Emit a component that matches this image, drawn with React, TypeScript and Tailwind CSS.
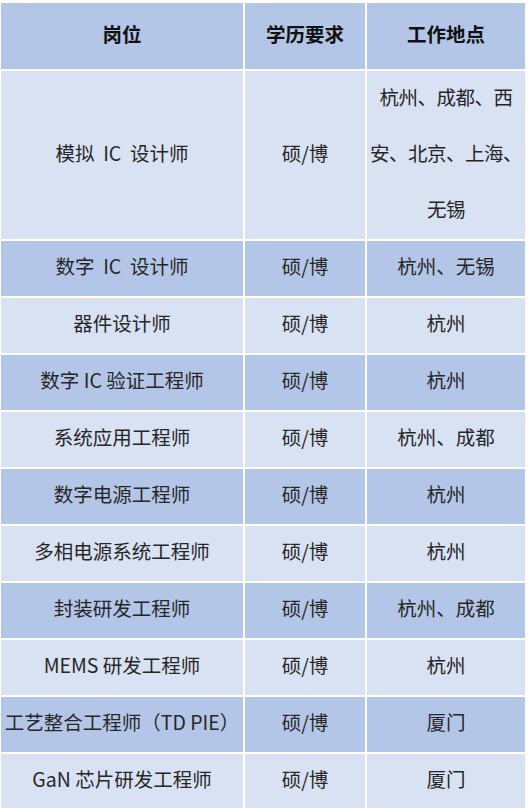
const rows: [string, string, string][] = [
  ["数字\u00a0\u00a0IC\u00a0\u00a0设计师", "硕/博", "杭州、无锡"],
  ["器件设计师", "硕/博", "杭州"],
  ["数字 IC 验证工程师", "硕/博", "杭州"],
  ["系统应用工程师", "硕/博", "杭州、成都"],
  ["数字电源工程师", "硕/博", "杭州"],
  ["多相电源系统工程师", "硕/博", "杭州"],
  ["封装研发工程师", "硕/博", "杭州、成都"],
  ["MEMS 研发工程师", "硕/博", "杭州"],
  ["工艺整合工程师（TD PIE）", "硕/博", "厦门"],
  ["GaN 芯片研发工程师", "硕/博", "厦门"],
];

const cell = "flex items-center justify-center text-center whitespace-nowrap";

export default function App() {
  return (
    <div className="min-h-screen bg-white pt-[3px] pl-[1px] font-['Noto_Sans_CJK_SC','Noto_Sans',sans-serif] text-[19.5px] text-[#262626]">
      <div className="grid w-[524px] grid-cols-[242px_120px_158px] gap-[2px] bg-white">
        <div className={`${cell} h-[66px] bg-[#b4c6e7] pb-[5px] font-bold text-[#111]`}>岗位</div>
        <div className={`${cell} h-[66px] bg-[#b4c6e7] pb-[5px] font-bold text-[#111]`}>学历要求</div>
        <div className={`${cell} h-[66px] bg-[#b4c6e7] pb-[5px] font-bold text-[#111]`}>工作地点</div>

        <div className={`${cell} h-[168px] bg-[#d9e2f3] pb-[5px]`}>模拟&nbsp;&nbsp;IC&nbsp;&nbsp;设计师</div>
        <div className={`${cell} h-[168px] bg-[#d9e2f3] pb-[5px]`}>硕/博</div>
        <div className={`${cell} h-[168px] bg-[#d9e2f3] pb-[4px] leading-[56px] tracking-[-0.5px]`}>
          杭州、成都、西
          <br />
          安、北京、上海、
          <br />
          无锡
        </div>

        {rows.map(([job, edu, loc], i) => {
          const bg = i % 2 === 0 ? "bg-[#b4c6e7]" : "bg-[#d9e2f3]";
          return [
            <div key={`a${i}`} className={`${cell} h-[55px] ${bg} pb-[5px]`}>{job}</div>,
            <div key={`b${i}`} className={`${cell} h-[55px] ${bg} pb-[5px]`}>{edu}</div>,
            <div key={`c${i}`} className={`${cell} h-[55px] ${bg} pb-[5px]`}>{loc}</div>,
          ];
        })}
      </div>
    </div>
  );
}
